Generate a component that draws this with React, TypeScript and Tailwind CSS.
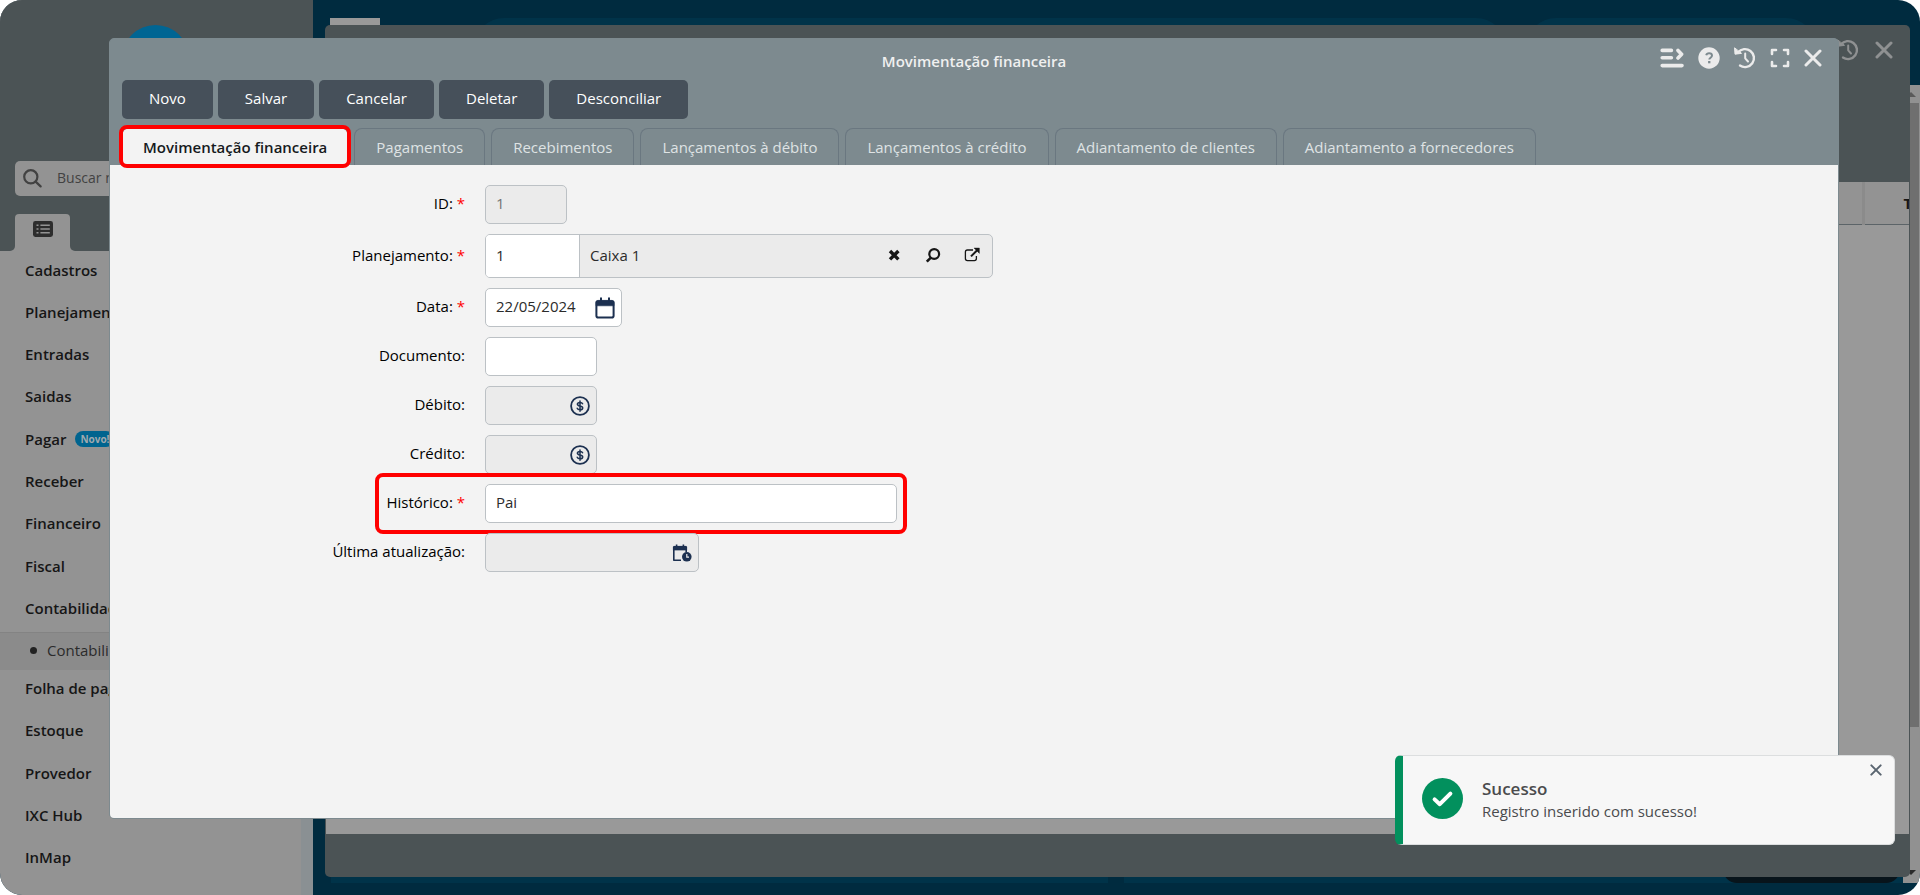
import React from "react";

const actions = ["Novo", "Salvar", "Cancelar", "Deletar", "Desconciliar"];

const tabs = [
  "Movimentação financeira",
  "Pagamentos",
  "Recebimentos",
  "Lançamentos à débito",
  "Lançamentos à crédito",
  "Adiantamento de clientes",
  "Adiantamento a fornecedores",
];

type MenuItem = { label: string; badge?: string; children?: string[] };

const menu: MenuItem[] = [
  { label: "Cadastros" },
  { label: "Planejamento" },
  { label: "Entradas" },
  { label: "Saidas" },
  { label: "Pagar", badge: "Novo!" },
  { label: "Receber" },
  { label: "Financeiro" },
  { label: "Fiscal" },
  { label: "Contabilidade", children: ["Contabilidade"] },
  { label: "Folha de pagamento" },
  { label: "Estoque" },
  { label: "Provedor" },
  { label: "IXC Hub" },
  { label: "InMap" },
];

function HistoryIcon({ className }: { className?: string }) {
  return (
    <svg viewBox="0 0 22 22" className={className} fill="none" stroke="currentColor" strokeLinecap="round" strokeLinejoin="round">
      <path d="M4 5.4A9 9 0 1 1 6 18.6" strokeWidth="2.4" />
      <path d="M0.6 1.2 1 7.2 7.2 6.4Z" fill="currentColor" strokeWidth="1" />
      <path d="M11.2 6.4v4.9l2.8 3.2" strokeWidth="2" />
    </svg>
  );
}

function CloseIcon({ className }: { className?: string }) {
  return (
    <svg viewBox="0 0 18 18" className={className} fill="none" stroke="currentColor" strokeWidth="3" strokeLinecap="round">
      <path d="M2 2 16 16M16 2 2 16" />
    </svg>
  );
}

function MenuRightIcon() {
  return (
    <svg viewBox="0 0 24 20" className="h-5 w-6" fill="none" stroke="currentColor" strokeWidth="3.6" strokeLinecap="round" strokeLinejoin="round">
      <path d="M2.2 2.4H11.4M2.2 9.8H11.4M2.2 17.6H22" />
      <path d="M18 2.4 21.6 6.2 18 10" />
    </svg>
  );
}

function HelpIcon() {
  return (
    <svg viewBox="0 0 22 22" className="size-[22px]" fill="none">
      <circle cx="11" cy="11" r="10.7" fill="currentColor" />
      <path d="M8.2 8.3C8.6 6.8 9.7 6.2 11.1 6.2c1.7 0 2.9 1 2.9 2.4 0 2.2-2.7 2.1-2.7 4" stroke="#7d8a8f" strokeWidth="2" />
      <rect x="10.1" y="14" width="2.3" height="2.3" fill="#7d8a8f" />
    </svg>
  );
}

function ExpandIcon() {
  return (
    <svg viewBox="0 0 20 20" className="size-5" fill="none" stroke="currentColor" strokeWidth="2.6" strokeLinecap="round" strokeLinejoin="round">
      <path d="M2 6V2H6M14 2H18V6M18 14V18H14M6 18H2V14" />
    </svg>
  );
}

function CalendarIcon() {
  return (
    <svg viewBox="0 0 20 22" className="h-[22px] w-5" fill="none" stroke="currentColor">
      <rect x="1.4" y="4.2" width="17.2" height="16.4" rx="1.8" strokeWidth="2" />
      <path d="M1 5.2Q1 3.4 2.8 3.4H17.2Q19 3.4 19 5.2V8.8H1Z" fill="currentColor" strokeWidth="0.6" />
      <path d="M6 0.6V4M14 0.6V4" strokeWidth="2" />
    </svg>
  );
}

function CalendarClockIcon() {
  return (
    <svg viewBox="0 0 20 18" className="h-[18px] w-5" fill="none" stroke="currentColor">
      <path d="M14.2 8V3.2H1.8V16.2H9" strokeWidth="1.6" strokeLinejoin="round" />
      <path d="M1 3.4Q1 2 2.4 2H13.6Q15 2 15 3.4V6.2H1Z" fill="currentColor" strokeWidth="0.2" />
      <path d="M4.6 0.4V3M11.4 0.4V3" strokeWidth="1.6" />
      <circle cx="14.8" cy="12.8" r="4.8" fill="currentColor" strokeWidth="0" />
      <path d="M14.8 10V13.2H17" stroke="#ebebeb" strokeWidth="1.2" />
    </svg>
  );
}

function MoneyIcon() {
  return (
    <svg viewBox="0 0 20 20" className="size-5" fill="none" stroke="currentColor" strokeLinecap="round">
      <circle cx="10" cy="10" r="8.9" strokeWidth="1.8" />
      <path d="M12.6 7.8C12.2 6.8 11.2 6.4 10 6.4c-1.5 0-2.6.7-2.6 1.8 0 2.5 5.3 1.2 5.3 3.7 0 1.1-1.2 1.8-2.7 1.8-1.3 0-2.4-.5-2.8-1.5M10 4.9v10.3" strokeWidth="1.5" />
    </svg>
  );
}

function Row({ id, label, required, highlight, children }: { id: string; label: string; required?: boolean; highlight?: boolean; children: React.ReactNode }) {
  return (
    <div className="relative flex w-fit items-center gap-5">
      <label htmlFor={id} className="w-[355px] shrink-0 pb-[3px] text-right text-black">
        {label}
        {required && <span className="text-[#ff0000]"> *</span>}
      </label>
      {children}
      {highlight && <span className="pointer-events-none absolute -right-2.5 -top-[11px] -bottom-[11px] left-[265px] rounded-lg border-4 border-[#ff0000]" />}
    </div>
  );
}

function Sidebar() {
  return (
    <aside className="flex w-[313px] shrink-0 flex-col bg-[#939393]">
      <div className="relative flex h-[214px] flex-col justify-end bg-[#4b5355] px-[15px] pb-[18px]">
        <span className="absolute left-[122px] top-[25px] size-[67px] rounded-full bg-[#006593]" />
        <div className="relative flex h-[35px] items-center gap-[15px] rounded-[5px] bg-[#939393] px-2 text-[#424242]">
          <svg viewBox="0 0 19 19" className="size-[19px]" fill="none" stroke="currentColor" strokeWidth="2.2" strokeLinecap="round">
            <circle cx="7.8" cy="7.8" r="6.6" />
            <path d="M12.6 12.6 17.6 17.4" />
          </svg>
          <input aria-label="Buscar no menu" placeholder="Buscar no menu" className="min-w-0 flex-1 bg-transparent pb-0.5 text-sm outline-none placeholder:text-[#424242]" />
        </div>
      </div>
      <div className="flex h-[37px] shrink-0">
        <span className="w-[15px] rounded-br-[5px] bg-[#4b5355]" />
        <div className="w-[55px] bg-[#4b5355]">
          <button aria-label="Menu" className="flex size-full items-start justify-center rounded-t-[4px] bg-[#939393] pt-[7px] text-[#2d2d2d]">
            <svg viewBox="0 0 20 16" className="h-4 w-5">
              <rect width="20" height="16" rx="2.4" fill="currentColor" />
              <path d="M3.5 4.2h2M7.4 4.2h9.4M3.5 8h2M7.4 8h9.4M3.5 11.8h2M7.4 11.8h9.4" stroke="#939393" strokeWidth="1.5" />
            </svg>
          </button>
        </div>
        <span className="flex-1 rounded-bl-[5px] bg-[#4b5355]" />
      </div>
      <nav className="flex min-h-0 flex-1 flex-col border-r-12 border-[#8a9093] pb-3.5">
        {menu.map((item) => (
          <React.Fragment key={item.label}>
            <a href="#" className="flex flex-1 items-center gap-[9px] pb-[5px] pl-[25px] font-semibold text-[#161616]">
              {item.label}
              {item.badge && <span className="flex h-4 items-center rounded-full bg-[#00648f] px-[5px] text-[10px] font-bold text-[#9fa9ae]">{item.badge}</span>}
            </a>
            {item.children?.map((child) => (
              <a key={child} href="#" className="flex h-[38px] shrink-0 items-center gap-2.5 border-t border-[#838383] bg-[#8b8b8b] pb-0.5 pl-[30px] text-[#2b2b2b]">
                <span className="size-[7px] rounded-full bg-[#222]" />
                {child}
              </a>
            ))}
          </React.Fragment>
        ))}
      </nav>
    </aside>
  );
}

function BackWindow() {
  return (
    <section className="absolute bottom-[18px] left-[325px] right-2.5 top-[25px] flex flex-col overflow-hidden rounded-[5px] bg-[#4b5355]">
      <header className="flex h-[157px] shrink-0 items-start justify-end gap-4 pr-[17px] pt-3.5 text-[#8f9192]">
        <button aria-label="Histórico"><HistoryIcon className="size-[22px]" /></button>
        <button aria-label="Fechar" className="pt-0.5"><CloseIcon className="size-[18px]" /></button>
      </header>
      <div className="mx-px flex-1 overflow-hidden bg-[#999]">
        <table className="w-full table-fixed border-collapse bg-[#939393]">
          <thead>
            <tr className="h-[42px] border-b border-[#5c6468]">
              <th className="border-r-3 border-[#8b8b8b]" />
              <th className="w-[46px] overflow-hidden whitespace-nowrap pl-[39px] text-left font-bold text-[#161616]">Tipo</th>
            </tr>
          </thead>
        </table>
      </div>
      <footer className="h-[43px] shrink-0" />
    </section>
  );
}

function Modal() {
  return (
    <section role="dialog" aria-label="Movimentação financeira" className="absolute bottom-[76px] left-[109px] right-[81px] top-[38px] flex flex-col rounded-[5px] border border-[#7d8a8f] bg-[#7d8a8f]">
      <header className="relative flex h-[41px] shrink-0 items-center justify-center">
        <h1 className="pt-0.5 font-semibold text-[#f0f0f0]">Movimentação financeira</h1>
        <div className="absolute right-4 top-2 flex items-center gap-3.5 text-[#ebebeb]">
          <button aria-label="Menu lateral"><MenuRightIcon /></button>
          <button aria-label="Ajuda"><HelpIcon /></button>
          <button aria-label="Histórico"><HistoryIcon className="size-[22px]" /></button>
          <button aria-label="Tela cheia"><ExpandIcon /></button>
          <button aria-label="Fechar"><CloseIcon className="size-[18px]" /></button>
        </div>
      </header>
      <div className="flex shrink-0 gap-[5px] px-3">
        {actions.map((a) => (
          <button key={a} className="h-[39px] rounded-[5px] bg-[#46505a] px-[27px] pb-[3px] font-medium text-white">{a}</button>
        ))}
      </div>
      <div role="tablist" className="mt-[9px] flex h-[37px] shrink-0 gap-1.5 px-3">
        {tabs.map((t, i) =>
          i === 0 ? (
            <button key={t} role="tab" aria-selected="true" className="relative rounded-t-lg bg-[#f3f3f3] px-[21px] font-semibold text-[#161a1d]">
              {t}
              <span className="pointer-events-none absolute -inset-[3px] rounded-lg border-4 border-[#ff0000]" />
            </button>
          ) : (
            <button key={t} role="tab" aria-selected="false" className="rounded-t-lg border border-b-0 border-[#6a7780] px-[21px] text-[#dfe3e4]">
              {t}
            </button>
          ),
        )}
      </div>
      <form className="flex min-h-0 flex-1 flex-col gap-2.5 rounded-b-[4px] bg-[#f3f3f3] pt-5">
        <Row id="id" label="ID:" required>
          <input id="id" readOnly value="1" className="h-[39px] w-[82px] rounded-[5px] border border-[#bcc1c5] bg-[#ebebeb] px-2.5 pb-[3px] text-[#757575]" />
        </Row>
        <Row id="planejamento" label="Planejamento:" required>
          <div className="flex h-11 w-[508px] overflow-hidden rounded-[5px] border border-[#bcc1c5] bg-[#ebebeb]">
            <input id="planejamento" defaultValue="1" className="w-[94px] border-r border-[#bcc1c5] bg-white px-2.5 pb-0.5" />
            <input aria-label="Descrição do planejamento" readOnly value="Caixa 1" className="min-w-0 flex-1 px-2.5 pb-0.5" />
            <div className="flex items-center gap-[23px] pb-0.5 pr-3 text-[#161616]">
              <button type="button" aria-label="Limpar">
                <svg viewBox="0 0 16 16" className="size-4" fill="none" stroke="currentColor" strokeWidth="3.4">
                  <path d="M4 4 12.4 12.4M12.4 4 4 12.4" />
                </svg>
              </button>
              <button type="button" aria-label="Buscar">
                <svg viewBox="0 0 16 16" className="size-4" fill="none" stroke="currentColor">
                  <circle cx="9.2" cy="7" r="4.9" strokeWidth="2.2" />
                  <path d="M5.6 10.8 1.8 14.6" strokeWidth="2.6" />
                </svg>
              </button>
              <button type="button" aria-label="Abrir">
                <svg viewBox="0 0 16 16" className="size-4" fill="none" stroke="currentColor">
                  <path d="M9 3H3.4Q1.4 3 1.4 5V11.6Q1.4 13.6 3.4 13.6H10.4Q12.4 13.6 12.4 11.6V9" strokeWidth="1.3" />
                  <path d="M7 9.4 13.4 3" strokeWidth="2" />
                  <path d="M10 1H15.4V6.4Z" fill="currentColor" strokeWidth="0.4" />
                </svg>
              </button>
            </div>
          </div>
        </Row>
        <Row id="data" label="Data:" required>
          <div className="flex h-[39px] w-[137px] items-center rounded-[5px] border border-[#bcc1c5] bg-white pr-1.5">
            <input id="data" defaultValue="22/05/2024" className="min-w-0 flex-1 pb-[3px] pl-2.5 outline-none" />
            <button type="button" aria-label="Abrir calendário" className="text-[#1c3050]"><CalendarIcon /></button>
          </div>
        </Row>
        <Row id="documento" label="Documento:">
          <input id="documento" className="h-[39px] w-28 rounded-[5px] border border-[#bcc1c5] bg-white px-2.5" />
        </Row>
        <Row id="debito" label="Débito:">
          <div className="flex h-[39px] w-28 items-center rounded-[5px] border border-[#bcc1c5] bg-[#ebebeb] pr-1.5 text-[#1c3050]">
            <input id="debito" readOnly className="min-w-0 flex-1 pl-2.5" />
            <MoneyIcon />
          </div>
        </Row>
        <Row id="credito" label="Crédito:">
          <div className="flex h-[39px] w-28 items-center rounded-[5px] border border-[#bcc1c5] bg-[#ebebeb] pr-1.5 text-[#1c3050]">
            <input id="credito" readOnly className="min-w-0 flex-1 pl-2.5" />
            <MoneyIcon />
          </div>
        </Row>
        <Row id="historico" label="Histórico:" required highlight>
          <input id="historico" defaultValue="Pai" className="h-[39px] w-[412px] rounded-[5px] border border-[#bcc1c5] bg-white px-2.5 pb-[3px]" />
        </Row>
        <Row id="atualizacao" label="Última atualização:">
          <div className="flex h-[39px] w-[214px] items-center rounded-[5px] border border-[#bcc1c5] bg-[#ebebeb] pr-1.5 text-[#1c3050]">
            <input id="atualizacao" readOnly className="min-w-0 flex-1 pl-2.5" />
            <CalendarClockIcon />
          </div>
        </Row>
      </form>
    </section>
  );
}

function Toast() {
  return (
    <div role="status" className="absolute bottom-[50px] right-[25px] flex h-[90px] w-[500px] items-center gap-[19px] rounded-md border border-l-8 border-[#dcdedf] border-l-[#02905d] bg-[#f7f7f7] pb-[3px] pl-[19px] text-[#4a4b4d]">
      <svg viewBox="0 0 41 41" className="size-[41px] shrink-0" fill="none">
        <circle cx="20.5" cy="20.5" r="20.5" fill="#02905d" />
        <path d="M12.6 21.4 17.8 26.2 28.4 15.6" stroke="#fff" strokeWidth="4" strokeLinecap="round" strokeLinejoin="round" />
      </svg>
      <div>
        <p className="text-[17px] leading-6 font-semibold">Sucesso</p>
        <p className="leading-5">Registro inserido com sucesso!</p>
      </div>
      <button aria-label="Fechar aviso" className="absolute right-3 top-2 text-[#5a6570]"><CloseIcon className="size-3" /></button>
    </div>
  );
}

export default function App() {
  return (
    <div className="relative flex h-screen overflow-hidden rounded-[22px] bg-[#002b3f] font-['Open_Sans','Noto_Sans',sans-serif] text-[15px] leading-5 text-[#2b2b2b]">
      <Sidebar />
      <main className="flex flex-1 flex-col justify-between">
        <div className="flex pl-[17px] pt-[18px]">
          <span className="h-[30px] w-[50px] bg-[#999]" />
          <span className="ml-[94px] mr-5 h-[60px] flex-1 rounded-[30px] bg-[#003349]" />
          <span className="mr-[104px] h-[60px] w-[290px] rounded-[30px] bg-[#003349]" />
        </div>
        <div className="flex h-12 gap-4 pb-3 pl-[18px] pr-[3px]">
          <span className="flex-1 bg-[#003349]" />
          <span className="flex flex-1 justify-end bg-[#003349] pr-[17px]">
            <span className="w-[177px] rounded-b-[14px] bg-[#08141b]" />
          </span>
        </div>
      </main>
      <div className="absolute bottom-3 right-0 top-[85px] flex w-[17px] flex-col items-end bg-[#919191] pr-px">
        <span className="mt-[7px] mr-[3px] border-x-[5px] border-b-[5px] border-x-transparent border-b-[#5a5a5a]" />
        <span className="mt-1.5 h-[624px] w-[13px] bg-[#6f6f6f]" />
        <span className="mt-auto mb-2 mr-[3px] border-x-[5px] border-t-[5px] border-x-transparent border-t-[#2b2b2b]" />
      </div>
      <BackWindow />
      <Modal />
      <Toast />
    </div>
  );
}
